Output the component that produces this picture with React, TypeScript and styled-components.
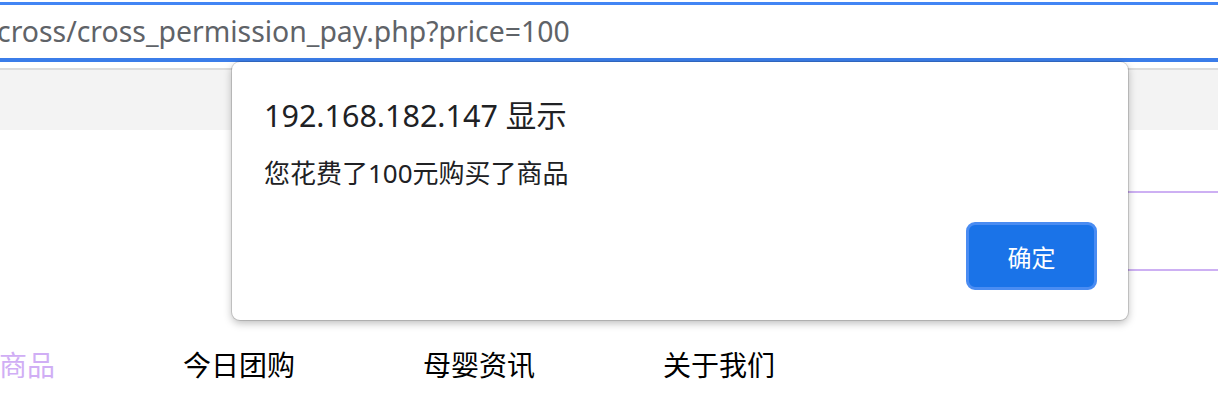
import React from 'react';
import styled, { createGlobalStyle } from 'styled-components';

const GlobalStyle = createGlobalStyle`
  html, body {
    margin: 0;
    padding: 0;
    background: #fff;
  }
  body {
    width: 1218px;
    height: 398px;
    overflow: hidden;
    font-family: "Noto Sans", "Noto Sans CJK SC", sans-serif;
  }
`;

const Page = styled.div`
  position: relative;
  width: 1218px;
  height: 398px;
  overflow: hidden;
`;

const AddressBar = styled.div`
  height: 68px;
  padding-top: 2px;
  box-sizing: border-box;
`;

const UrlBox = styled.div`
  height: 53px;
  border-top: 3px solid #4285f4;
  border-bottom: 4px solid #3b7de9;
  overflow: hidden;
  white-space: nowrap;
`;

// the input is scrolled a little, so the start of the url is hidden
const UrlText = styled.span`
  display: block;
  margin-left: -3px;
  font-family: "Noto Sans", sans-serif;
  font-size: 28.4px;
  line-height: 53px;
  color: #5f6368;
`;

const Toolbar = styled.div`
  height: 60px;
  border-top: 2px solid #dcdcdc;
  background: #f3f3f3;
`;

const BannerRow = styled.div`
  display: flex;
  justify-content: flex-end;
  margin-top: 61px;
`;

const Banner = styled.div`
  width: 640px;
  height: 76px;
  border-top: 2px solid #cdb0f3;
  border-bottom: 2px solid #cdb0f3;
`;

const Nav = styled.ul`
  display: flex;
  gap: 128px;
  margin: 79px 0 0 -57px;
  padding: 0;
  list-style: none;
`;

const NavItem = styled.li<{ active?: boolean }>`
  font-family: "Noto Sans CJK SC", sans-serif;
  font-size: 28px;
  line-height: 28px;
  width: 112px;
  white-space: nowrap;
  color: ${(p) => (p.active ? '#d0aef5' : '#000')};
`;

const Dialog = styled.div`
  position: absolute;
  left: 232px;
  top: 62px;
  width: 896px;
  height: 258px;
  box-sizing: border-box;
  padding: 35px 31px 30px 32px;
  display: flex;
  flex-direction: column;
  background: #fff;
  border-radius: 8px;
  box-shadow: 0 0 0 1px rgba(0, 0, 0, 0.14), 0 3px 8px rgba(0, 0, 0, 0.28);
`;

const DialogTitle = styled.div`
  font-size: 30.5px;
  line-height: 36px;
  color: #202124;
`;

const DialogMessage = styled.div`
  margin-top: 27px;
  font-size: 26px;
  line-height: 26px;
  color: #202124;
`;

const DialogFooter = styled.div`
  margin-top: auto;
  display: flex;
  justify-content: flex-end;
`;

const OkButton = styled.button`
  width: 131px;
  height: 68px;
  box-sizing: border-box;
  border: 3px solid #4a8cf2;
  border-radius: 9px;
  background: #1a73e8;
  color: #fff;
  font-family: "Noto Sans CJK SC", sans-serif;
  font-size: 24px;
  padding: 0;
  cursor: pointer;
`;

const navItems = ['全部商品', '今日团购', '母婴资讯', '关于我们'];

const App = () => {
  return (
    <Page>
      <GlobalStyle />
      <AddressBar>
        <UrlBox>
          <UrlText>cross/cross_permission_pay.php?price=100</UrlText>
        </UrlBox>
      </AddressBar>
      <Toolbar />
      <BannerRow>
        <Banner />
      </BannerRow>
      <Nav>
        {navItems.map((item, i) => (
          <NavItem key={item} active={i === 0}>
            {item}
          </NavItem>
        ))}
      </Nav>
      <Dialog>
        <DialogTitle>192.168.182.147 显示</DialogTitle>
        <DialogMessage>您花费了100元购买了商品</DialogMessage>
        <DialogFooter>
          <OkButton>确定</OkButton>
        </DialogFooter>
      </Dialog>
    </Page>
  );
};

export default App;
